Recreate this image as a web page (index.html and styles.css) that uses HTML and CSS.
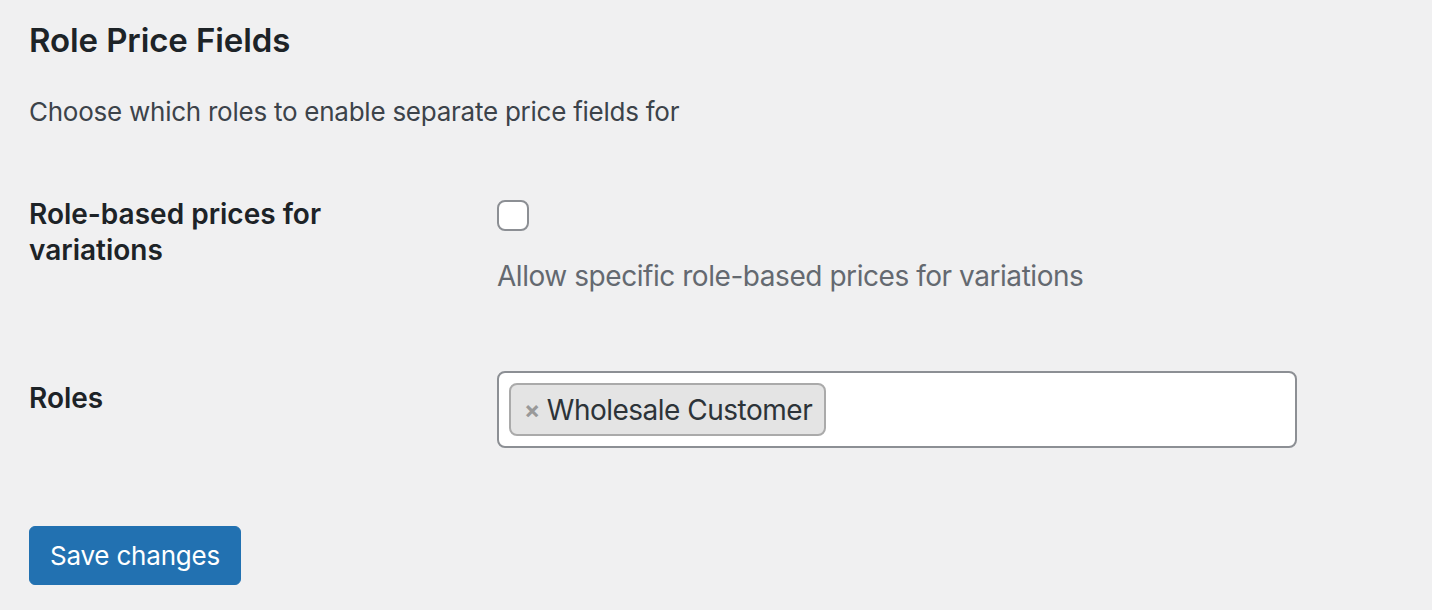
FILE: index.html
```html
<!DOCTYPE html>
<html lang="en">
<head>
    <meta charset="UTF-8">
    <meta name="viewport" content="width=device-width, initial-scale=1.0">
    <title>Role Price Fields</title>
    <link rel="stylesheet" href="styles.css">
</head>
<body>
    <div class="wrap">
        <h2 class="section_title">Role Price Fields</h2>
        <p class="intro">Choose which roles to enable separate price fields for</p>

        <div class="form_row row_variations">
            <div class="row_label">Role-based prices for variations</div>
            <div class="row_field">
                <label class="check_box"><input type="checkbox"></label>
                <p class="description">Allow specific role-based prices for variations</p>
            </div>
        </div>

        <div class="form_row row_roles">
            <div class="row_label">Roles</div>
            <div class="row_field">
                <div class="multi_select">
                    <span class="choice"><span class="choice_remove">×</span>Wholesale Customer</span>
                </div>
            </div>
        </div>

        <button class="btn_primary">Save changes</button>
    </div>
</body>
</html>
```

FILE: styles.css
```css
* {
    box-sizing: border-box;
}

body,
html {
    margin: 0;
    padding: 0;
    background-color: #f0f0f1;
    font-family: Inter, "Noto Sans", sans-serif;
    color: #3c434a;
}

.wrap {
    padding: 18px 29px 0 29px;
}

.section_title {
    margin: 0;
    font-size: 33px;
    line-height: 44px;
    font-weight: 600;
    letter-spacing: -0.1px;
    color: #1d2327;
}

.intro {
    margin: 30px 0 0 0;
    font-size: 26px;
    line-height: 39px;
    letter-spacing: -0.25px;
}

.form_row {
    display: grid;
    grid-template-columns: 468px 800px;
}

.row_label {
    padding-top: 40px;
    padding-right: 80px;
    font-size: 28px;
    line-height: 36px;
    font-weight: 600;
    color: #1d2327;
}

.row_variations {
    margin-top: 25px;
    padding-bottom: 44px;
}

.row_variations .row_field {
    padding-top: 44px;
}

.check_box {
    display: block;
    height: 31px;
}

.check_box input {
    appearance: none;
    -webkit-appearance: none;
    display: block;
    margin: 0;
    width: 32px;
    height: 31px;
    border: 2px solid #8c8f94;
    border-radius: 8px;
    background-color: #fff;
}

.description {
    margin: 26px 0 0 0;
    font-size: 28px;
    line-height: 39px;
    letter-spacing: -0.45px;
    color: #646970;
}

.row_roles .row_field {
    padding-top: 31px;
}

.multi_select {
    display: flex;
    align-items: flex-start;
    width: 800px;
    height: 77px;
    padding: 10px;
    border: 2px solid #8c8f94;
    border-radius: 8px;
    background-color: #fff;
}

.choice {
    display: flex;
    align-items: center;
    height: 53px;
    padding: 0 12px 0 13px;
    border: 2px solid #aaa;
    border-radius: 8px;
    background-color: #e4e4e4;
    font-size: 28px;
    letter-spacing: -0.5px;
    color: #2c3338;
}

.choice_remove {
    margin-right: 7px;
    color: #999;
    font-weight: 700;
    font-size: 24px;
}

.btn_primary {
    display: block;
    margin-top: 78px;
    width: 212px;
    height: 59px;
    padding: 0;
    border: 1px solid #2271b1;
    border-radius: 6px;
    background-color: #2271b1;
    color: #fff;
    font-family: Inter, "Noto Sans", sans-serif;
    font-size: 26px;
    letter-spacing: -0.2px;
    cursor: pointer;
}
```
